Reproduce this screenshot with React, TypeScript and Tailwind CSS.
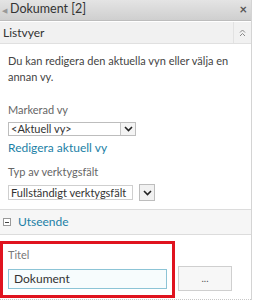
import React from "react";

const font = { fontFamily: 'Lato, "Open Sans", sans-serif' };

const Chevron = () => (
  <svg width="9" height="6" viewBox="0 0 9 6">
    <path d="M1 1 L4.5 4.5 L8 1" fill="none" stroke="#222" strokeWidth="1.6" />
  </svg>
);

const App = () => {
  return (
    <div className="w-[256px] h-[300px] overflow-hidden bg-white text-[11px] text-[#444]" style={font}>
      <div className="flex h-[300px] w-[252px] flex-col border-r border-[#d4d4d4]">
        {/* title */}
        <div className="flex h-[21px] items-center justify-between border-b border-[#bdbdbd] bg-gradient-to-b from-[#e4e4e4] to-[#cfcfcf] pl-[2px] pr-[4px]">
          <div className="flex items-center gap-[3px]">
            <span className="text-[7px] text-[#999]">◀</span>
            <span className="text-[12.5px] text-[#333]">Dokument [2]</span>
          </div>
          <span className="text-[13px] font-bold leading-none text-[#555]">×</span>
        </div>
        {/* Listvyer */}
        <div className="mt-[1px] flex h-[23px] items-center justify-between border-b border-[#e0e0e0] bg-[#f1f1f1]">
          <span className="pl-[3px] text-[12px] text-[#333]">Listvyer</span>
          <div className="flex h-full w-[18px] items-center justify-center border-l border-[#e2e2e2]">
            <svg width="7" height="8" viewBox="0 0 7 8">
              <path d="M1 3.5 L3.5 1 L6 3.5 M1 7 L3.5 4.5 L6 7" fill="none" stroke="#888" strokeWidth="1" />
            </svg>
          </div>
        </div>
        <div className="flex flex-col px-[8px] pt-[9px]">
          <p className="leading-[16px]">Du kan redigera den aktuella vyn eller välja en annan vy.</p>
          <div className="mt-[17px] leading-[16px] text-[#666]">Markerad vy</div>
          <div className="mt-[4px] flex h-[14px] w-[128px] items-center border border-[#bdbdbd] bg-white">
            <span className="flex-1 pl-[2px] text-[#333]">&lt;Aktuell vy&gt;</span>
            <div className="flex h-full w-[15px] items-center justify-center border-l border-[#c6c6c6] bg-[#f4f4f4]">
              <Chevron />
            </div>
          </div>
          <a className="mt-[3px] text-[12px] leading-[18px] text-[#1c7fa6]">Redigera aktuell vy</a>
          <div className="mt-[7px] leading-[16px] text-[#666]">Typ av verktygsfält</div>
          <div className="mt-[5px] flex h-[15px] items-center gap-[6px]">
            <div className="flex h-full w-[125px] items-center whitespace-nowrap border border-[#cfcfcf] pl-[2px] text-[#333]">
              Fullständigt verktygsfält
            </div>
            <div className="flex h-[17px] w-[16px] items-center justify-center border border-[#bdbdbd] bg-[#f1f1f1]">
              <Chevron />
            </div>
          </div>
        </div>
        {/* Utseende */}
        <div className="mt-[9px] flex h-[26px] items-center gap-[7px] border-y border-[#dcdcdc] bg-[#f6f6f6] pl-[3px]">
          <div className="flex h-[8px] w-[8px] items-center justify-center border border-[#999] bg-white">
            <div className="h-[1px] w-[4px] bg-[#444]" />
          </div>
          <span className="text-[12px] text-[#1c7fa6]">Utseende</span>
        </div>
        <div className="mt-[6px] flex items-start gap-[3px]">
          <div className="flex w-[175px] flex-col border-[3px] border-[#e0131f] px-[5px] pb-[6px] pt-[3px]">
            <span className="leading-[16px] text-[#777]">Titel</span>
            <div className="mt-[6px] flex h-[20px] items-center border border-[#8cc4d6] bg-[#f7fcfd] pl-[5px] text-[12px] text-[#333]">
              Dokument
            </div>
          </div>
          <button className="mt-[25px] h-[25px] w-[54px] border border-[#cfcfcf] bg-[#f7f7f7] text-[10px] text-[#555]">...</button>
        </div>
        <div className="mt-[1px] border-t border-dotted border-[#c8c8c8]" />
      </div>
    </div>
  );
};

export default App;
